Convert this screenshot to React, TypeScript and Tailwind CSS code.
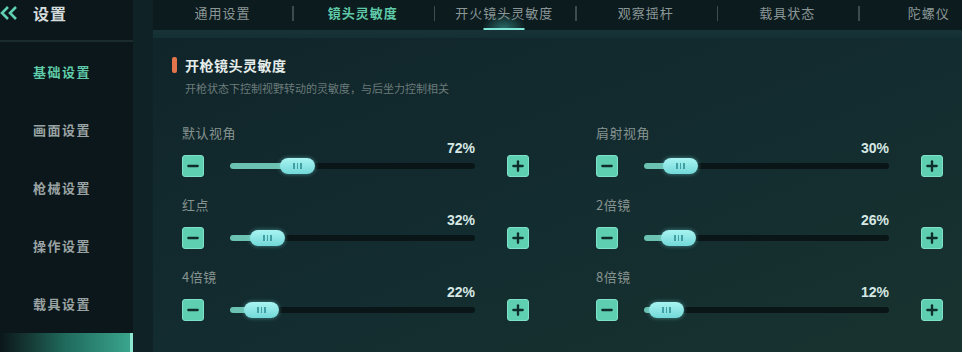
import { Minus, Plus } from 'lucide-react';

interface SliderItem {
  label: string;
  value: number;
  thumb: number;
}

const tabs = ['通用设置', '镜头灵敏度', '开火镜头灵敏度', '观察摇杆', '载具状态', '陀螺仪'];
const menu = ['基础设置', '画面设置', '枪械设置', '操作设置', '载具设置'];

const sliders: SliderItem[] = [
  { label: '默认视角', value: 72, thumb: 50 },
  { label: '肩射视角', value: 30, thumb: 19 },
  { label: '红点', value: 32, thumb: 20 },
  { label: '2倍镜', value: 26, thumb: 17 },
  { label: '4倍镜', value: 22, thumb: 14 },
  { label: '8倍镜', value: 12, thumb: 5 },
];

function StepButton({ kind }: { kind: 'minus' | 'plus' }) {
  return (
    <button className="w-[22px] h-[22px] shrink-0 rounded-[3px] bg-[#5fcfb2] border border-[#7fe2c8] flex items-center justify-center">
      {kind === 'minus' ? (
        <Minus size={16} strokeWidth={3.5} color="#0f2e2a" />
      ) : (
        <Plus size={16} strokeWidth={3.5} color="#0f2e2a" />
      )}
    </button>
  );
}

function SliderRow({ item }: { item: SliderItem }) {
  return (
    <div className="flex flex-col">
      <div className="h-[16px] text-[13px] leading-[16px] text-[#87938f] tracking-[0.5px]">{item.label}</div>
      <div className="h-[14px] pr-[54px] text-right text-[14px] leading-[14px] font-bold text-[#d6e8e3] font-['Liberation_Sans',sans-serif]">
        {item.value}%
      </div>
      <div className="h-[22px] flex items-center">
        <StepButton kind="minus" />
        <div className="ml-[26px] flex-1 relative h-[6px] rounded-full bg-[#0a1517]">
          <div className="absolute left-0 top-0 h-full rounded-full bg-[#6cc2b2]" style={{ width: item.thumb + 18 }} />
          <div
            className="absolute top-1/2 -translate-y-1/2 w-[35px] h-[16px] rounded-full bg-gradient-to-b from-[#a8f4f2] to-[#72d8d8] flex items-center justify-center gap-[2px] shadow-[0_0_4px_rgba(120,230,230,0.5)]"
            style={{ left: item.thumb }}
          >
            <span className="w-[1.5px] h-[6px] bg-[#3f9fa3]" />
            <span className="w-[1.5px] h-[6px] bg-[#3f9fa3]" />
            <span className="w-[1.5px] h-[6px] bg-[#3f9fa3]" />
          </div>
        </div>
        <div className="ml-[32px]">
          <StepButton kind="plus" />
        </div>
      </div>
    </div>
  );
}

export default function App() {
  return (
    <div className="w-[962px] h-[352px] flex overflow-hidden bg-[#0b181b] font-['Noto_Sans_CJK_SC','Noto_Sans',sans-serif]">
      <aside className="w-[133px] shrink-0 flex flex-col bg-[#0b171a]">
        <div className="h-[42px] shrink-0 flex items-start pt-[2px] border-b-2 border-[#1b2c30]">
          <div className="h-[22px] flex items-center">
            <svg width="20" height="14" viewBox="0 0 20 14" className="ml-[-1px]">
              <path d="M9 1 L3 7 L9 13" fill="none" stroke="#5fd0b2" strokeWidth="2.6" />
              <path d="M17 1 L11 7 L17 13" fill="none" stroke="#5fd0b2" strokeWidth="2.6" />
            </svg>
            <span className="ml-[14px] text-[16px] leading-[22px] font-bold text-[#d5dcdc] tracking-[1px]">设置</span>
          </div>
        </div>
        <nav className="flex flex-col pt-[1px]">
          {menu.map((m, i) => (
            <div
              key={m}
              className={`h-[58px] flex items-center pl-[33px] text-[13px] font-bold tracking-[1.5px] ${
                i === 0 ? 'text-[#5fcaa8]' : 'text-[#9aa3a3]'
              }`}
            >
              {m}
            </div>
          ))}
        </nav>
        <div className="mt-auto h-[19px] bg-gradient-to-r from-[#0b171a] via-[#1f6a5c] to-[#3aa58c] border-r-[3px] border-[#8fe8d2]" />
      </aside>

      <div className="w-[20px] shrink-0 bg-[#0f2226]" />

      <main className="flex-1 flex flex-col min-w-0">
        <div className="h-[30px] shrink-0 flex bg-[#0c1b1e] overflow-hidden">
          {tabs.map((t, i) => (
            <div
              key={t}
              className={`relative shrink-0 flex items-center justify-center pb-[4px] text-[13px] tracking-[1px] ${
                i === 0 ? 'w-[139px]' : 'w-[141.5px]'
              } ${i === 1 ? 'text-[#5fcaa8] font-bold' : 'text-[#8b9797]'}`}
            >
              {i > 0 && <span className="absolute left-0 top-[6px] w-[1.5px] h-[15px] bg-[#3d4d4f]" />}
              {i === 2 && (
                <>
                  <span className="absolute left-1/2 -translate-x-1/2 bottom-[1px] w-[44px] h-[16px] bg-[radial-gradient(ellipse_at_bottom,rgba(80,210,200,0.45),transparent_70%)]" />
                  <span className="absolute left-1/2 -translate-x-1/2 bottom-0 w-[41px] h-[2px] bg-[#7fe6d8]" />
                </>
              )}
              <span className="relative">{t}</span>
            </div>
          ))}
        </div>
        <div className="h-[8px] shrink-0 bg-gradient-to-b from-[#173337] to-[#143034]" />

        <section className="flex-1 bg-gradient-to-br from-[#10252a] via-[#132c30] to-[#18332f] pl-[19px] pr-[19px] pt-[17px]">
          <div className="flex items-center h-[20px]">
            <span className="w-[5px] h-[16px] rounded-[2px] bg-[#e3744c]" />
            <span className="ml-[8px] text-[14px] leading-[20px] font-bold text-[#e4ecea] tracking-[0.5px]">开枪镜头灵敏度</span>
          </div>
          <div className="mt-[6px] pl-[13px] h-[14px] text-[11px] leading-[14px] text-[#6c7b7a]">
            开枪状态下控制视野转动的灵敏度，与后坐力控制相关
          </div>
          <div className="mt-[30px] pl-[10px] grid grid-cols-2 gap-x-[67px] gap-y-[20px]">
            {sliders.map(s => (
              <SliderRow key={s.label} item={s} />
            ))}
          </div>
        </section>
      </main>
    </div>
  );
}
